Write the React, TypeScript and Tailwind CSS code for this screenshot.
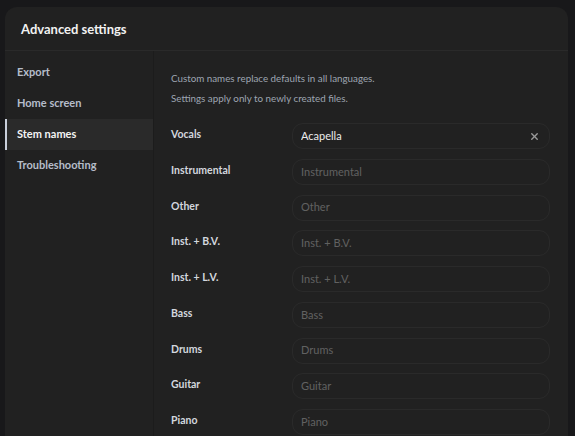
import { X } from "lucide-react";

const stems = [
  { label: "Vocals", value: "Acapella" },
  { label: "Instrumental", value: "" },
  { label: "Other", value: "" },
  { label: "Inst. + B.V.", value: "" },
  { label: "Inst. + L.V.", value: "" },
  { label: "Bass", value: "" },
  { label: "Drums", value: "" },
  { label: "Guitar", value: "" },
  { label: "Piano", value: "" },
];

const sections = ["Export", "Home screen", "Stem names", "Troubleshooting"];

function StemRow({ label, value }: { label: string; value: string }) {
  return (
    <div className="flex items-start">
      <div className="w-[121px] shrink-0 pt-[3px] text-[10.5px] font-bold leading-4 text-[#d3d7de]">
        {label}
      </div>
      <div className="flex h-[26px] flex-1 items-center rounded-[11px] border border-[#2a2a2a] pl-2 pr-[9px]">
        <input
          className="min-w-0 flex-1 bg-transparent text-[11px] text-[#ececec] outline-none placeholder:text-[#616161]"
          placeholder={label}
          defaultValue={value}
        />
        {value && <X className="h-[11px] w-[11px] text-[#9a9a9a]" strokeWidth={3} aria-hidden />}
      </div>
    </div>
  );
}

export default function App() {
  return (
    <div
      className="h-[436px] w-full overflow-hidden bg-[#18181a] pl-[5px] pr-[7px] pt-[7px]"
      style={{ fontFamily: 'Lato, "Noto Sans", sans-serif' }}
    >
      <div className="flex h-[440px] flex-col rounded-t-[12px] bg-[#212121]">
        <header className="flex h-[44px] shrink-0 items-center border-b border-[#2a2a2a] px-4 pt-[2px]">
          <h1 className="text-[13px] font-bold text-[#f2f2f2]">Advanced settings</h1>
        </header>
        <div className="flex flex-1">
          <nav className="w-[149px] shrink-0 border-r border-[#1c1c1c] pt-[6px]">
            {sections.map((s) => {
              const active = s === "Stem names";
              return (
                <div
                  key={s}
                  className={
                    active
                      ? "flex h-[31px] items-center border-l-2 border-[#c9cfdb] bg-[#2a2a2a] pl-[10px] text-[11px] font-bold text-[#f4f4f4]"
                      : "flex h-[31px] items-center border-l-2 border-transparent pl-[10px] text-[11px] font-bold text-[#b6bdca]"
                  }
                >
                  {s}
                </div>
              );
            })}
          </nav>
          <section className="flex-1 pl-[17px] pr-[18px] pt-[17px]">
            <div className="text-[9.8px] leading-5 text-[#9ea5b1]">
              <p>Custom names replace defaults in all languages.</p>
              <p>Settings apply only to newly created files.</p>
            </div>
            <div className="mt-[15px] flex flex-col gap-[9.75px]">
              {stems.map((s) => (
                <StemRow key={s.label} label={s.label} value={s.value} />
              ))}
            </div>
          </section>
        </div>
      </div>
    </div>
  );
}
